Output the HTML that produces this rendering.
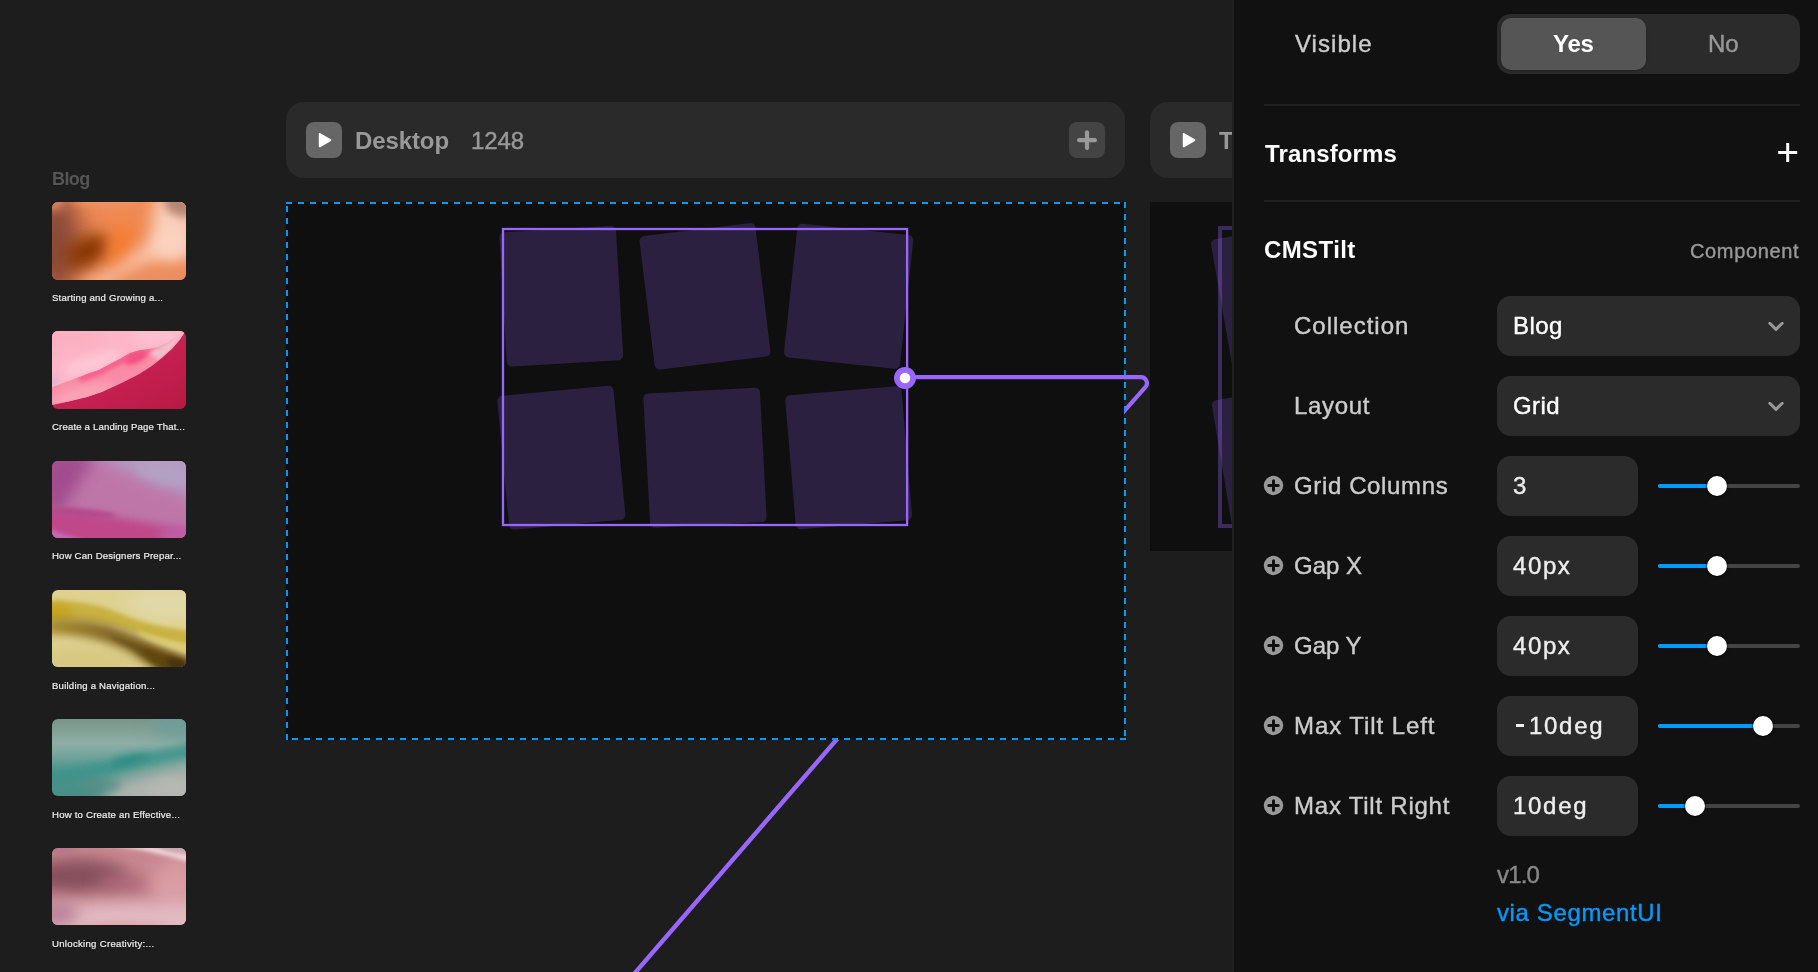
<!DOCTYPE html>
<html>
<head>
<meta charset="utf-8">
<style>
*{box-sizing:border-box;margin:0;padding:0}
html,body{width:1818px;height:972px;overflow:hidden;background:#1d1d1d}
body{font-family:"Liberation Sans",sans-serif;position:relative;color:#fff}
.abs{position:absolute}
.t,.cap{will-change:transform}
.t{position:absolute;white-space:pre;line-height:28px;font-size:24px;-webkit-text-stroke:.4px}
/* left list */
.b{font-weight:700;-webkit-text-stroke:0}
.blog{left:52px;top:166px;font-size:18px;-webkit-text-stroke:0;color:#555;letter-spacing:-.6px;line-height:26px}
.thumb{position:absolute;left:52px;width:134px;height:78px;border-radius:6px;overflow:hidden}
.cap{position:absolute;left:52px;font-size:9.600px;line-height:12px;color:#eee;white-space:pre;-webkit-text-stroke:.2px}
/* canvas */
.bar{position:absolute;top:102px;height:76px;background:#2a2a2a;border-radius:18px}
.play{position:absolute;width:36px;height:36px;border-radius:8px;background:#666;top:122px}
.frame{position:absolute;background:#0f0f0f}
/* panel */
#panel{position:absolute;left:1234px;top:0;width:584px;height:972px;background:#111}
.lbl{color:#ccc}
.box{position:absolute;background:#2b2b2b;border-radius:14px}
.hr{position:absolute;left:1264px;width:536px;height:2px;background:#222}
.track{position:absolute;left:1658px;width:142px;height:4px;border-radius:2px;background:#444}
.fill{position:absolute;left:1658px;height:4px;border-radius:2px;background:#09f}
.knob{position:absolute;width:20px;height:20px;border-radius:50%;background:#fff;box-shadow:0 1px 3px rgba(0,0,0,.6),0 0 0 1px rgba(0,0,0,.25)}
</style>
</head>
<body>

<!-- ===== canvas ===== -->
<div id="canvas" class="abs" style="left:0;top:0;width:1232px;height:972px;overflow:hidden">

  <!-- header bars -->
  <div class="bar" style="left:286px;width:839px"></div>
  <div class="play" style="left:306px"></div>
  <svg class="abs" style="left:306px;top:122px" width="36" height="36" viewBox="0 0 36 36"><path d="M13.800 12 L24.400 18.100 L13.800 24.300 Z" fill="#fff" stroke="#fff" stroke-width="2" stroke-linejoin="round"/></svg>
  <div class="t b" style="left:355px;top:127px;color:#999;letter-spacing:-.1px;">Desktop</div>
  <div class="t" style="left:471px;top:127px;color:#999;letter-spacing:-.1px">1248</div>
  <div class="abs" style="left:1069px;top:122px;width:36px;height:36px;border-radius:8px;background:#444"></div>
  <svg class="abs" style="left:1069px;top:122px" width="36" height="36" viewBox="0 0 36 36"><path d="M18 10.300 V26.100 M10.100 18.200 H25.900" stroke="#999" stroke-width="4.200" stroke-linecap="round"/></svg>

  <div class="bar" style="left:1150px;width:300px"></div>
  <div class="play" style="left:1170px"></div>
  <svg class="abs" style="left:1170px;top:122px" width="36" height="36" viewBox="0 0 36 36"><path d="M13.800 12 L24.400 18.100 L13.800 24.300 Z" fill="#fff" stroke="#fff" stroke-width="2" stroke-linejoin="round"/></svg>
  <div class="t b" style="left:1219px;top:127px;color:#999;">Tablet</div>

  <!-- frames -->
  <div class="frame" style="left:286px;top:202px;width:838px;height:538px"></div>
  <div class="frame" style="left:1150px;top:202px;width:300px;height:349px"></div>

  <svg class="abs" style="left:0;top:0" width="1232" height="972" viewBox="0 0 1232 972">
    <defs><clipPath id="cb"><rect x="0" y="740" width="1232" height="232"/></clipPath><clipPath id="cc"><path d="M0 0 H1232 V972 H1124 V381 H0 Z"/></clipPath></defs>
    <g fill="#2c2040">
      <rect x="503.00" y="229.00" width="116.7" height="134.5" rx="5" transform="rotate(-3.3 561.35 296.25)"/>
      <rect x="646.65" y="229.00" width="116.7" height="134.5" rx="5" transform="rotate(-6.9 705.00 296.25)"/>
      <rect x="790.30" y="229.00" width="116.7" height="134.5" rx="5" transform="rotate(6.1 848.65 296.25)"/>
      <rect x="503.00" y="390.50" width="116.7" height="134.5" rx="5" transform="rotate(-5.4 561.35 457.75)"/>
      <rect x="646.65" y="390.50" width="116.7" height="134.5" rx="5" transform="rotate(-3.05 705.00 457.75)"/>
      <rect x="790.30" y="390.50" width="116.7" height="134.5" rx="5" transform="rotate(-4.8 848.65 457.75)"/>
      <rect x="1221.00" y="229.00" width="116.7" height="134.5" rx="5" transform="rotate(-10 1279.35 296.25)"/>
      <rect x="1221.50" y="390.50" width="116.7" height="134.5" rx="5" transform="rotate(-9.5 1279.85 457.75)"/>
    </g>
    <rect x="1220" y="228" width="404" height="298" fill="none" stroke="#9966ff" stroke-opacity=".33" stroke-width="4"/>
    <!-- selection -->
    <rect x="503" y="229" width="404.100" height="296" fill="none" stroke="#9966ff" stroke-width="2.300"/>
    <!-- connector -->
    <path d="M844.900 730 L631.440 977" stroke="#9966ff" stroke-width="4.400" fill="none" clip-path="url(#cb)"/>
    <path d="M905 377.200 H1140.9 A6 6 0 0 1 1145.39 387.18 L1115.58 420.88" stroke="#9966ff" stroke-width="4.200" fill="none" clip-path="url(#cc)"/>
    <!-- dashed outline -->
    <g stroke="#0099ff" stroke-width="2" stroke-dasharray="6 6" fill="none">
      <path d="M286 203 H1126"/>
      <path d="M1125 202 V740"/>
      <path d="M1126 739 H286"/>
      <path d="M287 740 V202"/>
    </g>
    <circle cx="905" cy="378" r="11" fill="#9966ff"/>
    <circle cx="905" cy="378" r="5.200" fill="#fff"/>
  </svg>
</div>
<div class="abs" style="left:1232px;top:0;width:2px;height:972px;background:#1e1e1e"></div>

<!-- ===== left list ===== -->
<svg width="0" height="0" style="position:absolute">
  <defs>
    <filter id="b3" filterUnits="userSpaceOnUse" x="-60" y="-60" width="254" height="198"><feGaussianBlur stdDeviation="2"/></filter>
    <filter id="b5" filterUnits="userSpaceOnUse" x="-60" y="-60" width="254" height="198"><feGaussianBlur stdDeviation="4.500"/></filter>
    <filter id="b8" filterUnits="userSpaceOnUse" x="-60" y="-60" width="254" height="198"><feGaussianBlur stdDeviation="8"/></filter>
    <filter id="b12" filterUnits="userSpaceOnUse" x="-60" y="-60" width="254" height="198"><feGaussianBlur stdDeviation="12"/></filter>
  </defs>
</svg>

<!-- thumb 1 : orange -->
<div class="thumb" style="top:202px"><svg width="134" height="78" viewBox="0 0 134 78">
  <rect width="134" height="78" fill="#ef8a54"/>
  <ellipse cx="4" cy="42" rx="26" ry="52" fill="#8a4a38" filter="url(#b12)"/>
  <ellipse cx="36" cy="49" rx="25" ry="14" fill="#863604" filter="url(#b8)" transform="rotate(-25 36 49)"/>
  <ellipse cx="68" cy="42" rx="10" ry="22" fill="#f67a2c" filter="url(#b8)" transform="rotate(25 68 42)"/>
  <path d="M104 -8 L142 -8 L142 56 L98 58 L40 90 L20 88 L66 66 L98 40 Z" fill="#fbcfbb" filter="url(#b8)"/>
  <ellipse cx="118" cy="42" rx="13" ry="14" fill="#fbd3c2" filter="url(#b8)"/>
  <ellipse cx="115" cy="80" rx="46" ry="9" fill="#e8926a" filter="url(#b8)"/>
  <ellipse cx="132" cy="0" rx="20" ry="15" fill="#b98672" filter="url(#b5)"/>
  <ellipse cx="55" cy="-3" rx="34" ry="7" fill="#ee9468" filter="url(#b5)"/>
  <ellipse cx="2" cy="0" rx="10" ry="8" fill="#d88468" filter="url(#b5)"/>
</svg></div>
<div class="cap" style="top:292px;letter-spacing:.2px">Starting and Growing a...</div>

<!-- thumb 2 : pink / crimson -->
<div class="thumb" style="top:331px"><svg width="134" height="78" viewBox="0 0 134 78">
  <defs>
    <linearGradient id="g2a" x1="0" y1="0" x2="1" y2="1"><stop offset="0" stop-color="#d02c5c"/><stop offset=".6" stop-color="#c41f50"/><stop offset="1" stop-color="#b81a44"/></linearGradient>
    <clipPath id="c2b"><path d="M-2 74.500 L0 73.900 L17.400 70.200 L35 66 L49.800 60.900 L70.200 51.700 L86.900 43.300 L99.800 35 L110 26.700 L120.200 17.400 L127.600 9.100 L132.200 2.100 L135 -2 L-2 -2 Z"/></clipPath>
    <clipPath id="c2l"><path d="M-2 57 L0 56.100 L17.400 49.800 L35.900 42.400 L47 38.700 L59 32.200 L68.300 27.600 L77.600 22 L86.900 19.300 L96.100 17.900 L105.400 16 L114.600 11.900 L123.900 5.400 L128.500 1.700 L131 -2 L-2 -2 Z"/></clipPath>
  </defs>
  <rect width="134" height="78" fill="url(#g2a)"/>
  <g clip-path="url(#c2b)">
    <rect width="134" height="78" fill="#f98ca6"/>
    <ellipse cx="30" cy="64" rx="34" ry="9" fill="#f9a2b6" filter="url(#b5)" transform="rotate(-14 30 64)"/>
    <path d="M30 47 L47 41 L59 34.500 L68.300 30 L77.600 24.500 L86.900 21.800 L98 20" stroke="#f65e8c" stroke-width="7" fill="none" stroke-linecap="round" filter="url(#b3)"/>
    <ellipse cx="84" cy="27" rx="12" ry="5" fill="#f4507f" filter="url(#b3)" transform="rotate(-24 84 27)"/>
    <path d="M96 22 L112 14 L128 0 L136 0 L124 16 L108 30 Z" fill="#f2c0ce" filter="url(#b3)"/>
    <path d="M104 34 L118 22 L130 6 L134 8 L122 24 L108 38 Z" fill="#e890ac" filter="url(#b3)"/>
  </g>
  <g clip-path="url(#c2l)">
    <rect width="134" height="78" fill="#fdb6c7"/>
    <ellipse cx="40" cy="32" rx="30" ry="8" fill="#fec8d6" filter="url(#b5)" transform="rotate(-18 40 32)"/>
    <ellipse cx="20" cy="8" rx="30" ry="10" fill="#fbaec0" filter="url(#b8)"/>
    <ellipse cx="105" cy="6" rx="26" ry="8" fill="#fec0d0" filter="url(#b5)"/>
    <ellipse cx="2" cy="50" rx="6" ry="6" fill="#e8b4d0" filter="url(#b3)"/>
  </g>
</svg></div>
<div class="cap" style="top:421px;letter-spacing:.16px">Create a Landing Page That...</div>

<!-- thumb 3 : magenta / lavender -->
<div class="thumb" style="top:461px;height:77px"><svg width="134" height="77" viewBox="0 0 134 77">
  <rect width="134" height="77" fill="#be76a8"/>
  <path d="M-10 -10 L46 -10 L22 30 L8 52 L-10 54 Z" fill="#a24c8e" filter="url(#b8)"/>
  <path d="M34 -12 L150 -12 L150 38 Q90 22 34 -12 Z" fill="#b29dc2" filter="url(#b8)"/>
  <ellipse cx="112" cy="12" rx="30" ry="10" fill="#b4a0c2" filter="url(#b5)" transform="rotate(12 112 12)"/>
  <path d="M-10 47 Q60 53 150 73 L150 92 L-10 92 Z" fill="#c0468a" filter="url(#b5)"/>
  <ellipse cx="30" cy="52" rx="34" ry="4" fill="#b4488a" filter="url(#b3)" transform="rotate(5 30 52)"/>
  <path d="M-5 67 L44 84 L-5 84 Z" fill="#c46ab2" filter="url(#b3)"/>
  <ellipse cx="132" cy="74" rx="26" ry="7" fill="#c05ea4" filter="url(#b5)"/>
</svg></div>
<div class="cap" style="top:550px;letter-spacing:.19px">How Can Designers Prepar...</div>

<!-- thumb 4 : yellow -->
<div class="thumb" style="top:590px;height:77px"><svg width="134" height="77" viewBox="0 0 134 77">
  <defs><linearGradient id="g4d" x1="0" y1="0" x2="1" y2="0"><stop offset="0" stop-color="#a89030"/><stop offset=".45" stop-color="#836626"/><stop offset="1" stop-color="#6a5018"/></linearGradient></defs>
  <rect width="134" height="77" fill="#dfd190"/>
  <ellipse cx="118" cy="12" rx="44" ry="20" fill="#e0d8a6" filter="url(#b8)"/>
  <path d="M-5 11 Q32 9 62 21 Q98 37 140 41 L140 56 Q100 48 70 38 Q40 28 -5 30 Z" fill="#c9b242" filter="url(#b3)"/>
  <ellipse cx="4" cy="22" rx="16" ry="8" fill="#c8a41c" filter="url(#b5)"/>
  <path d="M-5 28 Q40 27 70 40 Q104 55 140 68 L140 90 L112 86 Q88 68 58 55 Q34 45 -5 44 Z" fill="url(#g4d)" filter="url(#b5)"/>
  <path d="M56 46 Q90 55 140 75 L140 84 L116 82 Q84 62 56 46 Z" fill="#5e4610" filter="url(#b3)"/>
  <ellipse cx="128" cy="76" rx="14" ry="6" fill="#4a360c" filter="url(#b3)" transform="rotate(25 128 76)"/>
  <path d="M84 40 Q110 50 140 56 L140 64 Q110 56 90 46 Z" fill="#dccb70" filter="url(#b3)"/>
  <ellipse cx="34" cy="71" rx="50" ry="13" fill="#d6c880" filter="url(#b8)"/>
</svg></div>
<div class="cap" style="top:680px;letter-spacing:.21px">Building a Navigation...</div>

<!-- thumb 5 : teal -->
<div class="thumb" style="top:719px;height:77px"><svg width="134" height="77" viewBox="0 0 134 77">
  <defs><linearGradient id="g5a" x1="0" y1="0" x2="0" y2="1"><stop offset="0" stop-color="#7a9488"/><stop offset=".32" stop-color="#8eaea6"/><stop offset=".6" stop-color="#5e9c94"/><stop offset="1" stop-color="#4a8c84"/></linearGradient></defs>
  <rect width="134" height="77" fill="url(#g5a)"/>
  <ellipse cx="128" cy="6" rx="30" ry="12" fill="#6e9e98" filter="url(#b8)"/>
  <path d="M-10 54 Q60 44 150 22 L150 40 Q80 50 -10 68 Z" fill="#3e948c" filter="url(#b5)"/>
  <ellipse cx="78" cy="42" rx="20" ry="5" fill="#2c8c82" filter="url(#b5)" transform="rotate(-12 78 42)"/>
  <path d="M64 62 Q110 48 150 42 L150 90 L44 90 Z" fill="#b0b4ae" filter="url(#b8)"/>
  <ellipse cx="118" cy="70" rx="22" ry="10" fill="#b6b8b2" filter="url(#b5)"/>
  <ellipse cx="14" cy="62" rx="30" ry="8" fill="#429088" filter="url(#b8)"/>
  <ellipse cx="50" cy="66" rx="20" ry="4" fill="#5a8e86" filter="url(#b5)"/>
</svg></div>
<div class="cap" style="top:809px;letter-spacing:.21px">How to Create an Effective...</div>

<!-- thumb 6 : rose -->
<div class="thumb" style="top:848px;height:77px"><svg width="134" height="77" viewBox="0 0 134 77">
  <rect width="134" height="77" fill="#c88890"/>
  <ellipse cx="24" cy="28" rx="52" ry="17" fill="#86505c" filter="url(#b8)"/>
  <ellipse cx="72" cy="36" rx="26" ry="10" fill="#ac6878" filter="url(#b8)"/>
  <ellipse cx="124" cy="36" rx="24" ry="24" fill="#d99ca2" filter="url(#b8)"/>
  <path d="M-10 60 Q60 52 150 54 L150 90 L-10 90 Z" fill="#e3bac2" filter="url(#b8)"/>
  <ellipse cx="6" cy="66" rx="20" ry="12" fill="#b88098" filter="url(#b8)"/>
  <path d="M44 -4 Q90 -1 140 15 L140 6 Q100 -4 60 -6 Z" fill="#f2d6dc" filter="url(#b3)"/>
  <ellipse cx="124" cy="0" rx="18" ry="5" fill="#c9aab0" filter="url(#b3)" transform="rotate(10 124 0)"/>
  <ellipse cx="70" cy="79" rx="44" ry="5" fill="#dca4ac" filter="url(#b5)"/>
  <ellipse cx="10" cy="2" rx="16" ry="4" fill="#b87888" filter="url(#b3)"/>
</svg></div>
<div class="cap" style="top:938px;letter-spacing:.29px">Unlocking Creativity:...</div>
<div class="t b blog">Blog</div>

<!-- ===== right panel ===== -->
<div id="panel"></div>

<!-- Visible row -->
<div class="t lbl" style="left:1295px;top:30px;letter-spacing:1.05px">Visible</div>
<div class="box" style="left:1497px;top:14px;width:303px;height:60px"></div>
<div class="abs" style="left:1501px;top:18px;width:145px;height:52px;border-radius:10px;background:#555;box-shadow:0 1px 3px rgba(0,0,0,.2)"></div>
<div class="t b" style="left:1553px;top:30px;letter-spacing:-.3px">Yes</div>
<div class="t" style="left:1708px;top:30px;color:#999">No</div>

<div class="hr" style="top:104px"></div>

<!-- Transforms -->
<div class="t b" style="left:1265px;top:140px;letter-spacing:.12px">Transforms</div>
<svg class="abs" style="left:1778px;top:143px" width="20" height="20" viewBox="0 0 20 20"><path d="M9.700 0 V19 M0.200 9.500 H19.200" stroke="#fff" stroke-width="3" fill="none"/></svg>

<div class="hr" style="top:200px"></div>

<!-- CMSTilt -->
<div class="t b" style="left:1264px;top:236px;letter-spacing:.4px">CMSTilt</div>
<div class="t" style="left:1690px;top:237px;font-size:20px;color:#999;letter-spacing:.64px">Component</div>

<!-- Collection -->
<div class="t lbl" style="left:1294px;top:312px;letter-spacing:1px">Collection</div>
<div class="box" style="left:1497px;top:296px;width:303px;height:60px"></div>
<div class="t" style="left:1513px;top:312px;letter-spacing:.4px">Blog</div>
<svg class="abs" style="left:1766px;top:316px" width="20" height="20" viewBox="0 0 20 20"><path d="M3.800 7.300 L10 13.400 L16.200 7.300" stroke="#999" stroke-width="3" fill="none" stroke-linecap="round" stroke-linejoin="round"/></svg>

<!-- Layout -->
<div class="t lbl" style="left:1294px;top:392px;letter-spacing:.65px">Layout</div>
<div class="box" style="left:1497px;top:376px;width:303px;height:60px"></div>
<div class="t" style="left:1513px;top:392px;letter-spacing:.4px">Grid</div>
<svg class="abs" style="left:1766px;top:396px" width="20" height="20" viewBox="0 0 20 20"><path d="M3.800 7.300 L10 13.400 L16.200 7.300" stroke="#999" stroke-width="3" fill="none" stroke-linecap="round" stroke-linejoin="round"/></svg>

<!-- slider rows -->
<svg class="abs" style="left:1263px;top:475px" width="21" height="21" viewBox="0 0 21 21"><circle cx="10.5" cy="10.500" r="9.700" fill="#999"/><path d="M10.500 5.800 V15.200 M5.800 10.500 H15.200" stroke="#111" stroke-width="3" fill="none" stroke-linecap="round"/></svg>
<div class="t lbl" style="left:1294px;top:472px;letter-spacing:.63px">Grid Columns</div>
<div class="box" style="left:1497px;top:456px;width:141px;height:60px"></div>
<div class="t" style="left:1513px;top:472px;color:#eee;letter-spacing:0px">3</div>
<div class="track" style="top:484px"></div><div class="fill" style="top:484px;width:59px"></div><div class="knob" style="left:1707px;top:476px"></div>
<svg class="abs" style="left:1263px;top:555px" width="21" height="21" viewBox="0 0 21 21"><circle cx="10.5" cy="10.500" r="9.700" fill="#999"/><path d="M10.500 5.800 V15.200 M5.800 10.500 H15.200" stroke="#111" stroke-width="3" fill="none" stroke-linecap="round"/></svg>
<div class="t lbl" style="left:1294px;top:552px;letter-spacing:0px">Gap X</div>
<div class="box" style="left:1497px;top:536px;width:141px;height:60px"></div>
<div class="t" style="left:1513px;top:552px;color:#eee;letter-spacing:1.6px">40px</div>
<div class="track" style="top:564px"></div><div class="fill" style="top:564px;width:59px"></div><div class="knob" style="left:1707px;top:556px"></div>
<svg class="abs" style="left:1263px;top:635px" width="21" height="21" viewBox="0 0 21 21"><circle cx="10.5" cy="10.500" r="9.700" fill="#999"/><path d="M10.500 5.800 V15.200 M5.800 10.500 H15.200" stroke="#111" stroke-width="3" fill="none" stroke-linecap="round"/></svg>
<div class="t lbl" style="left:1294px;top:632px;letter-spacing:0px">Gap Y</div>
<div class="box" style="left:1497px;top:616px;width:141px;height:60px"></div>
<div class="t" style="left:1513px;top:632px;color:#eee;letter-spacing:1.6px">40px</div>
<div class="track" style="top:644px"></div><div class="fill" style="top:644px;width:59px"></div><div class="knob" style="left:1707px;top:636px"></div>
<svg class="abs" style="left:1263px;top:715px" width="21" height="21" viewBox="0 0 21 21"><circle cx="10.5" cy="10.500" r="9.700" fill="#999"/><path d="M10.500 5.800 V15.200 M5.800 10.500 H15.200" stroke="#111" stroke-width="3" fill="none" stroke-linecap="round"/></svg>
<div class="t lbl" style="left:1294px;top:712px;letter-spacing:.93px">Max Tilt Left</div>
<div class="box" style="left:1497px;top:696px;width:141px;height:60px"></div>
<div class="abs" style="left:1515.800px;top:724.200px;width:8.500px;height:2.400px;background:#eee"></div>
<div class="t" style="left:1529px;top:712px;color:#eee;letter-spacing:1.7px">10deg</div>
<div class="track" style="top:724px"></div><div class="fill" style="top:724px;width:105px"></div><div class="knob" style="left:1753px;top:716px"></div>
<svg class="abs" style="left:1263px;top:795px" width="21" height="21" viewBox="0 0 21 21"><circle cx="10.5" cy="10.500" r="9.700" fill="#999"/><path d="M10.500 5.800 V15.200 M5.800 10.500 H15.200" stroke="#111" stroke-width="3" fill="none" stroke-linecap="round"/></svg>
<div class="t lbl" style="left:1294px;top:792px;letter-spacing:.77px">Max Tilt Right</div>
<div class="box" style="left:1497px;top:776px;width:141px;height:60px"></div>
<div class="t" style="left:1513px;top:792px;color:#eee;letter-spacing:1.7px">10deg</div>
<div class="track" style="top:804px"></div><div class="fill" style="top:804px;width:37px"></div><div class="knob" style="left:1685px;top:796px"></div>


<div class="t" style="left:1497px;top:861px;color:#888;letter-spacing:-.8px">v1.0</div>
<div class="t" style="left:1497px;top:899px;color:#09f;letter-spacing:.62px">via SegmentUI</div>

</body>
</html>
